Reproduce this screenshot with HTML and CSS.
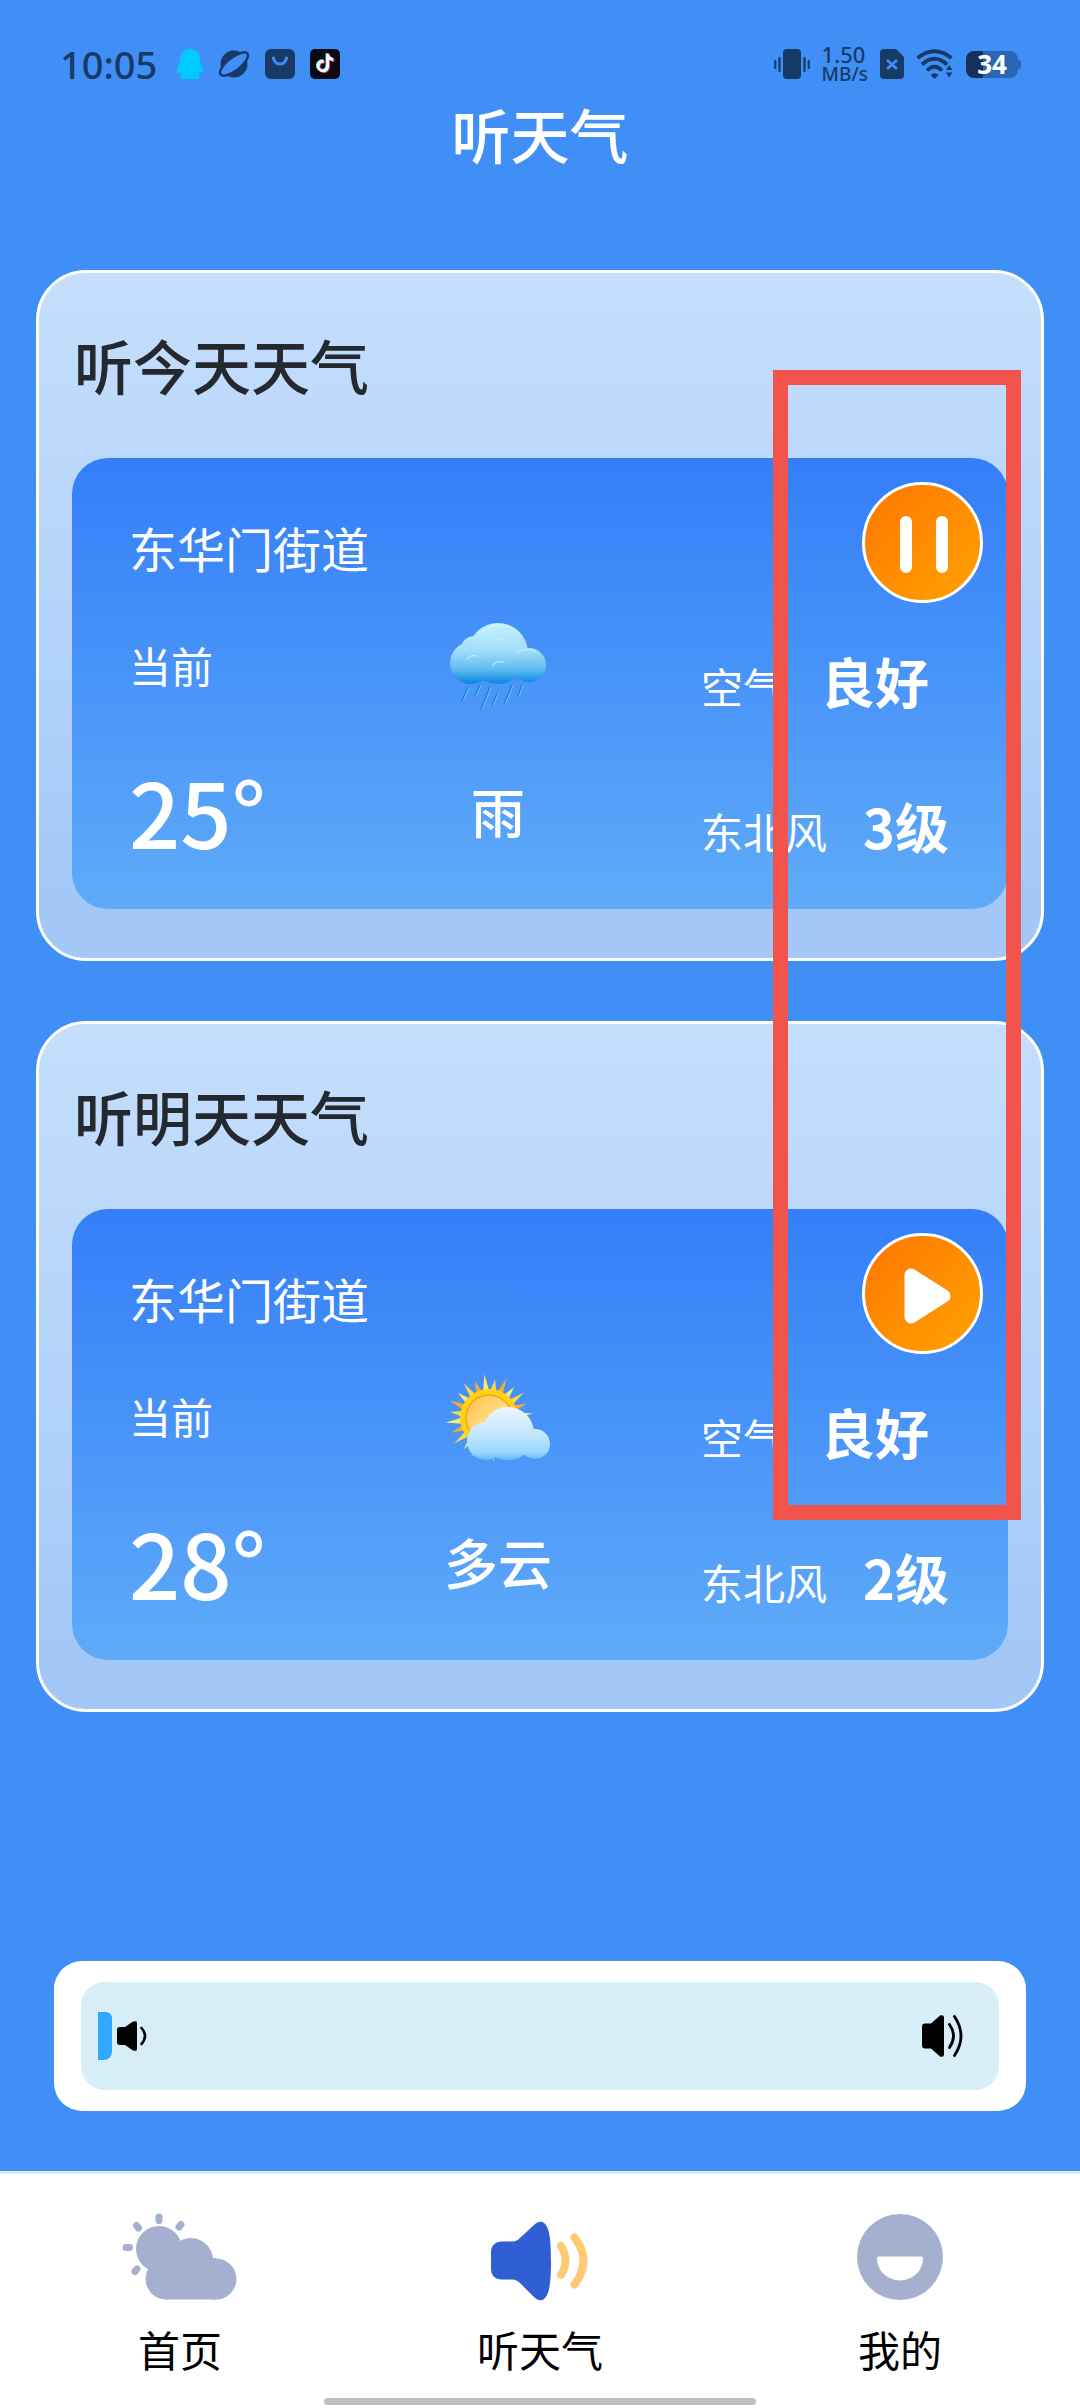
FILE: index.html
```html
<!DOCTYPE html>
<html lang="zh-CN">
<head>
  <meta charset="UTF-8">
  <meta name="viewport" content="width=device-width, initial-scale=1.0">
  <title>听天气</title>
  <link rel="stylesheet" href="styles.css">
</head>
<body>
  <div class="status-bar">
    <div class="status-left">
      <span class="time">10:05</span>
      <svg width="26" height="30" viewBox="0 0 26 30">
        <path fill="#00cbff" d="M13 0c6 0 10 4.500 10 10v3c1.500 3 3 6 3 9 0 2-1 2.500-3 .5-.5 1.500-1 2.500-2 3.500 2 1.500 2 4-1 4H6c-3 0-3-2.500-1-4-1-1-1.500-2-2-3.500C1 24.500 0 24 0 22c0-3 1.500-6 3-9v-3C3 4.500 7 0 13 0z"/>
      </svg>
      <svg width="32" height="30" viewBox="0 0 32 30">
        <circle cx="16" cy="15" r="13.500" fill="#173a66"/>
        <ellipse cx="16" cy="15" rx="17" ry="6.500" transform="rotate(-38 16 15)" fill="#408ff6" stroke="#173a66" stroke-width="2.500"/>
      </svg>
      <svg width="30" height="30" viewBox="0 0 30 30">
        <rect width="30" height="30" rx="6" fill="#173a66"/>
        <path d="M8.500 9c1 8 12 8 13 0" fill="none" stroke="#408ff6" stroke-width="3" stroke-linecap="round"/>
      </svg>
      <svg width="30" height="30" viewBox="0 0 30 30">
        <rect width="30" height="30" rx="5" fill="#0b0b16"/>
        <g fill="none" stroke-width="3.200" transform="translate(2.500 1.500) scale(.87)">
          <path d="M13 12.500a5.500 5.500 0 1 0 4.500 5.500V4c.5 4 2.500 6 6.500 6.500" transform="translate(-1 -.8)" stroke="#3ff0ea"/>
          <path d="M13 12.500a5.500 5.500 0 1 0 4.500 5.500V4c.5 4 2.500 6 6.500 6.500" transform="translate(1 1)" stroke="#f0325a"/>
          <path d="M13 12.500a5.500 5.500 0 1 0 4.500 5.500V4c.5 4 2.500 6 6.500 6.500" stroke="#fff"/>
        </g>
      </svg>
    </div>
    <div class="status-right">
      <svg width="36" height="30" viewBox="0 0 36 30">
        <rect x="9" width="18" height="30" rx="4" fill="#173a66"/>
        <path d="M1.200 12v7M5.500 9v13M30.500 9v13M34.800 12v7" stroke="#173a66" stroke-width="2.200" stroke-linecap="round"/>
      </svg>
      <div class="net-speed">
        <span>1.50</span>
        <span class="net-unit">MB/s</span>
      </div>
      <svg width="24" height="30" viewBox="0 0 24 30">
        <path d="M4 0h12l8 8v18a4 4 0 0 1-4 4H4a4 4 0 0 1-4-4V4a4 4 0 0 1 4-4z" fill="#173a66"/>
        <path d="M7 11l10 9M17 11L7 20" stroke="#408ff6" stroke-width="2.800"/>
      </svg>
      <svg width="38" height="30" viewBox="0 0 38 30">
        <g fill="none" stroke="#173a66" stroke-width="3.800">
          <path d="M1.500 9Q18.500-4.500 35.500 9"/>
          <path d="M6 15.500Q18.500 4 31 15.500"/>
          <path d="M11 21.500Q18.500 14 26 21.500"/>
        </g>
        <path d="M14.500 26q4-3.500 8 0l-4 4zM30 21l3-5 3.500 5zM30 23.500h6.500l-3.500 5z" fill="#173a66"/>
      </svg>
      <span class="battery">34</span>
    </div>
  </div>

  <header class="page-header">
    <h1>听天气</h1>
  </header>

  <main class="content">
    <section class="card">
      <h2>听今天天气</h2>
      <div class="panel">
        <div class="panel-top">
          <span class="location">东华门街道</span>
          <button class="play-btn" type="button" aria-label="暂停">
            <svg width="120" height="120" viewBox="0 0 120 120">
              <path d="M43 39v45M79 39v45" stroke="#fff" stroke-width="12" stroke-linecap="round"/>
            </svg>
          </button>
        </div>
        <div class="details">
          <div class="col-temp">
            <span class="label">当前</span>
            <span class="temp">25°</span>
          </div>
          <div class="col-weather">
            <svg width="102" height="98" viewBox="448 616 102 98">
              <defs>
                <linearGradient id="rainCloud" gradientUnits="userSpaceOnUse" x1="0" y1="622" x2="0" y2="683">
                  <stop offset="0" stop-color="#c4f2fe"/>
                  <stop offset=".45" stop-color="#a2ddfa"/>
                  <stop offset=".75" stop-color="#62bdf3"/>
                  <stop offset="1" stop-color="#0785e2"/>
                </linearGradient>
              </defs>
              <g fill="url(#rainCloud)">
                <circle cx="475" cy="648" r="13"/>
                <circle cx="472" cy="662" r="21"/>
                <circle cx="499" cy="652" r="30"/>
                <ellipse cx="499" cy="664" rx="24" ry="19"/>
                <circle cx="530" cy="664" r="17"/>
              </g>
              <g fill="none" stroke="#d6f5ff" stroke-width="1.500" stroke-linecap="round" opacity=".6">
                <path d="M468 658q4-5 10-3M494 664q4-5 11-3M494 640q4-3 9-2M518 652q8-6 18-2M482 632q12-12 30-5"/>
              </g>
              <path d="M470 686l-6 14M482 684l-5 11M492 686l-9 22M499 693l-5 11M514 684l-8 19M524 684l-4 11" stroke="#74c9fb" stroke-width="1.500"/>
              <path d="M469 686l-6 14M481 684l-5 11M491 686l-9 22M498 693l-5 11M513 684l-8 19M523 684l-4 11" stroke="#1782d8" stroke-width="1.500" stroke-linecap="round"/>
            </svg>
            <span class="weather">雨</span>
          </div>
          <div class="col-air">
            <p><span class="label">空气</span><strong>良好</strong></p>
            <p><span class="label">东北风</span><strong>3级</strong></p>
          </div>
        </div>
      </div>
    </section>

    <section class="card">
      <h2>听明天天气</h2>
      <div class="panel">
        <div class="panel-top">
          <span class="location">东华门街道</span>
          <button class="play-btn" type="button" aria-label="播放">
            <svg width="120" height="120" viewBox="0 0 120 120">
              <path d="M48 41v42l33-21z" fill="#fff" stroke="#fff" stroke-width="13" stroke-linejoin="round"/>
            </svg>
          </button>
        </div>
        <div class="details">
          <div class="col-temp">
            <span class="label">当前</span>
            <span class="temp">28°</span>
          </div>
          <div class="col-weather">
            <svg width="106" height="98" viewBox="446 1366 106 98">
              <defs>
                <linearGradient id="sunDisk" x1="0" y1="0" x2="1" y2="1">
                  <stop offset="0" stop-color="#ffc04c"/>
                  <stop offset=".6" stop-color="#ffdf82"/>
                  <stop offset="1" stop-color="#fff0a8"/>
                </linearGradient>
                <linearGradient id="sunnyCloud" gradientUnits="userSpaceOnUse" x1="0" y1="1405" x2="0" y2="1458">
                  <stop offset="0" stop-color="#eaf7ff"/>
                  <stop offset=".5" stop-color="#c3e7ff"/>
                  <stop offset=".85" stop-color="#9ad8ff"/>
                  <stop offset="1" stop-color="#62b8fa"/>
                </linearGradient>
                <g id="rays">
                  <path d="M-3-27L0-44 3-27z" fill="#ffe96a"/>
                  <path d="M-3-27L0-39 3-27z" transform="rotate(15)" fill="#ffd93b"/>
                  <path d="M-3-27L0-43 3-27z" transform="rotate(30)" fill="#f9a93a"/>
                  <path d="M-3-27L0-40 3-27z" transform="rotate(45)" fill="#ffe96a"/>
                  <path d="M-3-27L0-43 3-27z" transform="rotate(60)" fill="#ffd93b"/>
                  <path d="M-3-27L0-40 3-27z" transform="rotate(75)" fill="#f9a93a"/>
                </g>
              </defs>
              <g transform="translate(490 1416)">
                <use href="#rays" transform="rotate(-6)"/>
                <use href="#rays" transform="rotate(84)"/>
                <use href="#rays" transform="rotate(174)"/>
                <use href="#rays" transform="rotate(264)"/>
                <circle r="29" fill="#ffd311"/>
                <circle r="23" fill="url(#sunDisk)" stroke="#f5a51c" stroke-width="1.500"/>
              </g>
              <g fill="url(#sunnyCloud)">
                <circle cx="487" cy="1439" r="19"/>
                <circle cx="509" cy="1431" r="26"/>
                <ellipse cx="509" cy="1442" rx="22" ry="16"/>
                <circle cx="536" cy="1442" r="15"/>
              </g>
            </svg>
            <span class="weather">多云</span>
          </div>
          <div class="col-air">
            <p><span class="label">空气</span><strong>良好</strong></p>
            <p><span class="label">东北风</span><strong>2级</strong></p>
          </div>
        </div>
      </div>
    </section>

    <div class="volume">
      <div class="volume-inner">
        <input class="volume-range" type="range" min="0" max="100" value="0" aria-label="音量">
        <div class="volume-icons">
          <svg width="30" height="30" viewBox="0 0 30 30">
            <path d="M3 6h5l8-5.500q4-1 4 1v27q0 2-4 1L8 24H3q-3 0-3-3V9q0-3 3-3z"/>
            <path d="M24.500 7q7 8 0 16" fill="none" stroke="#000" stroke-width="2.600" stroke-linecap="round"/>
          </svg>
          <svg width="41" height="42" viewBox="0 0 41 42">
            <path d="M3 8.500h6l9-8q4-1 4 2v37q0 3-4 2l-9-8H3q-3 0-3-3v-19q0-3 3-3z"/>
            <path d="M27.500 9.500q8 11.500 0 23M32.500 1.500q13 19.500 0 39" fill="none" stroke="#000" stroke-width="2.800" stroke-linecap="round"/>
          </svg>
        </div>
      </div>
    </div>

    <div class="highlight"></div>
  </main>

  <nav class="tab-bar">
    <a href="#home">
      <svg width="120" height="92" viewBox="0 0 120 92">
        <g fill="#a5b0cf">
          <circle cx="39" cy="39" r="23"/>
          <circle cx="71" cy="50" r="22"/>
          <circle cx="96" cy="69" r="20.500"/>
          <circle cx="46" cy="69" r="20.500"/>
          <path d="M46 48h50v41.500H46z"/>
        </g>
        <path d="M39 7v3.500M16.500 15.500l2 2.500M61 14.500l-2 2.500M6 37.500h3.500M17 59l-2 2.500" stroke="#a5b0cf" stroke-width="7" stroke-linecap="round"/>
      </svg>
      首页
    </a>
    <a href="#listen">
      <svg width="120" height="92" viewBox="0 0 120 92">
        <path d="M22 31.500h10c4 0 6-1.500 9-4.500l13-12c4-4 8-4 10-2 5 4 7 14 7 38s-2 34-7 38c-2 2-6 2-10-2L41 74c-3-3-5-4.500-9-4.500H22c-7 0-11-4-11-11v-16c0-7 4-11 11-11z" fill="#2f5fd3"/>
        <path d="M81 36q9 14.500 0 29M94.500 27.500q18 23.500 0 47" fill="none" stroke="#ffca74" stroke-width="8" stroke-linecap="round"/>
      </svg>
      听天气
    </a>
    <a href="#mine">
      <svg width="120" height="92" viewBox="0 0 120 92">
        <circle cx="60" cy="47" r="43" fill="#a5b0cf"/>
        <path d="M38 46.500h44q1 0 1 2a23 22 0 0 1-46 0q0-2 1-2z" fill="#fff"/>
      </svg>
      我的
    </a>
    <span class="home-indicator"></span>
  </nav>
</body>
</html>
```

FILE: styles.css
```css
* {
  box-sizing: border-box;
  margin: 0;
  padding: 0;
}

body {
  display: flex;
  flex-direction: column;
  min-height: 100vh;
  background: #408ff6;
  color: white;
  font-family: "Noto Sans CJK SC", sans-serif;
}

svg {
  display: block;
  flex-shrink: 0;
}

/* status bar */
.status-bar {
  display: flex;
  justify-content: space-between;
  align-items: center;
  height: 88px;
  padding: 40px 60px 0;
  color: #173a66;
  font-family: "Noto Sans", sans-serif;
  font-weight: 500;
}

.status-left {
  display: flex;
  align-items: center;
  gap: 15px;
}

.time {
  margin-right: 5px;
  font-size: 38px;
  line-height: 48px;
}

.status-right {
  display: flex;
  align-items: center;
  gap: 12px;
}

.net-speed {
  display: flex;
  flex-direction: column;
  font-size: 22px;
  line-height: 20px;
}

.net-unit {
  font-size: 19px;
}

.battery {
  position: relative;
  width: 52px;
  height: 27px;
  margin-right: 2px;
  border-radius: 8px;
  background: linear-gradient(to right, #16305a 33%, #2b66b4 33%);
  color: white;
  font-size: 26px;
  font-weight: 700;
  line-height: 27px;
  text-align: center;
}

.battery::after {
  content: "";
  position: absolute;
  top: 9px;
  right: -3px;
  width: 3px;
  height: 9px;
  border-radius: 0 3px 3px 0;
  background: #2b66b4;
}

.page-header h1 {
  font-size: 59px;
  font-weight: 500;
  line-height: 92px;
  text-align: center;
}

/* content */
.content {
  position: relative;
  flex: 1;
  display: flex;
  flex-direction: column;
  gap: 60px;
  padding: 90px 36px 60px;
}

.card {
  padding: 56px 33px 49px;
  border: 3px solid white;
  border-radius: 50px;
  background: linear-gradient(#c5defc, #b0d1fa 60%, #a3c8f7 90%);
}

.card h2 {
  margin-bottom: 57px;
  padding-left: 2px;
  color: #24292f;
  font-size: 59px;
  font-weight: 500;
  line-height: 72px;
}

.panel {
  padding: 24px 25px 48px 57px;
  border-radius: 36px;
  background: linear-gradient(#347ef8, #5fabf9);
}

.panel-top {
  display: flex;
  justify-content: space-between;
  align-items: center;
}

.location {
  padding-top: 8px;
  font-size: 48px;
}

.play-btn {
  width: 121px;
  height: 121px;
  border: 3px solid white;
  border-radius: 50%;
  background: linear-gradient(135deg, #ff7600, #ffa200);
  display: flex;
  align-items: center;
  justify-content: center;
  cursor: pointer;
}

.details {
  display: grid;
  grid-template-columns: 166px 1fr 282px;
}

.col-temp,
.col-weather,
.col-air {
  display: flex;
  flex-direction: column;
  line-height: 60px;
}

.col-temp {
  padding-top: 32px;
  gap: 65px;
}

.col-weather {
  align-items: center;
  padding-top: 14px;
  gap: 66px;
}

.col-air {
  padding-top: 48px;
  gap: 80px;
}

.col-air p {
  display: flex;
  align-items: baseline;
  gap: 36px;
  white-space: nowrap;
}

.label {
  font-size: 42px;
}

.temp {
  font-size: 90px;
  font-weight: 500;
  line-height: 100px;
}

.weather {
  font-size: 54px;
  font-weight: 500;
}

.col-air strong {
  font-size: 54px;
  font-weight: 700;
}

/* volume */
.volume {
  margin: auto 18px 0;
  padding: 21px 27px;
  border-radius: 28px;
  background: white;
}

.volume-inner {
  display: grid;
  align-items: center;
  height: 108px;
  padding: 0 36px 0 17px;
  border-radius: 24px;
  background: #d7edf8;
}

.volume-range,
.volume-icons {
  grid-area: 1 / 1;
}

.volume-range {
  width: 100%;
  height: 48px;
  appearance: none;
  background: transparent;
}

.volume-range::-webkit-slider-thumb {
  appearance: none;
  width: 14px;
  height: 48px;
  border-radius: 0 6px 8px 0;
  background: #31a8ff;
}

.volume-icons {
  display: flex;
  justify-content: space-between;
  align-items: center;
  padding-left: 19px;
  pointer-events: none;
}

/* frame over the play buttons */
.highlight {
  position: absolute;
  top: 190px;
  right: 59px;
  width: 248px;
  height: 1150px;
  border: 15px solid #f2544c;
  pointer-events: none;
}

/* bottom tabs */
.tab-bar {
  position: relative;
  display: grid;
  grid-template-columns: repeat(3, 1fr);
  padding: 36px 0 29px;
  border-top: 3px solid #d7edf8;
  background: white;
}

.tab-bar a {
  display: flex;
  flex-direction: column;
  align-items: center;
  gap: 17px;
  color: black;
  font-size: 42px;
  line-height: 60px;
  text-decoration: none;
}

.home-indicator {
  position: absolute;
  bottom: 3px;
  left: 30%;
  width: 40%;
  height: 7px;
  border-radius: 4px;
  background: #bfbfbf;
}
```
